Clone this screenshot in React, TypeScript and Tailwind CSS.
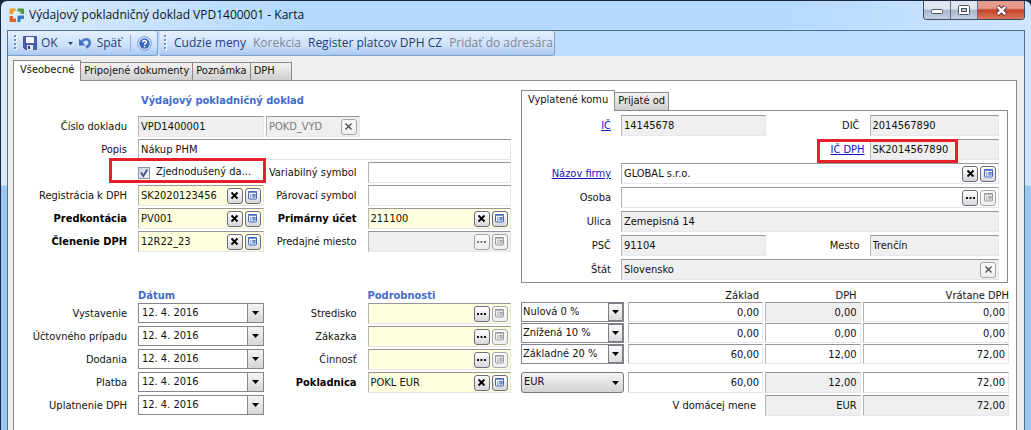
import type { ReactNode } from "react";

type Tone = "white" | "gray" | "yellow";
type Action = "clear" | "clearOff" | "more" | "moreOff" | "card" | "cardOff";

const tones: Record<Tone, string> = {
  white: "bg-white",
  gray: "bg-[#efefef]",
  yellow: "bg-[#ffffdf]",
};

const actionNames: Record<Action, string> = {
  clear: "Vymazať",
  clearOff: "Vymazať",
  more: "Vybrať",
  moreOff: "Vybrať",
  card: "Karta",
  cardOff: "Karta",
};

function ActionIcon({ kind }: { kind: Action }) {
  const off = kind.endsWith("Off");
  if (kind.startsWith("clear")) {
    return (
      <svg width="9" height="9" viewBox="0 0 9 9" aria-hidden="true">
        <path d="M1.5 1.5 7.5 7.5M7.5 1.5 1.5 7.5" stroke={off ? "#4a4a4a" : "#000"} strokeWidth={off ? 1.3 : 1.8} />
      </svg>
    );
  }
  if (kind.startsWith("more")) {
    return (
      <svg width="9" height="9" viewBox="0 0 9 9" aria-hidden="true">
        <path d="M0 4h2v2H0zM3.5 4h2v2h-2zM7 4h2v2H7z" fill={off ? "#777" : "#111"} />
      </svg>
    );
  }
  const c = off ? "#9a9a9a" : "#3f68b4";
  return (
    <svg width="9" height="9" viewBox="0 0 9 9" aria-hidden="true">
      <rect x="0.5" y="0.5" width="8" height="7.5" rx="1" fill={off ? "#eee" : "#f4f8ff"} stroke={c} />
      <path d="M0 1h9" stroke={c} strokeWidth="1.4" />
      <path d="M2 3.500h1.500v1H2zM2 5.500h1.500v1H2zM4.500 3h3v3.500h-3z" fill={c} />
      <path d="M5.500 4.200h1v1.200h-1z" fill="#fff" />
    </svg>
  );
}

function ActionButton({ kind }: { kind: Action }) {
  const off = kind.endsWith("Off");
  return (
    <button
      type="button"
      disabled={off}
      aria-label={actionNames[kind]}
      className={`flex h-4 w-4 shrink-0 items-center justify-center rounded-[3px] border bg-linear-to-b ${
        off ? "border-[#a5a5a5] from-[#fafafa] to-[#efefef]" : "border-[#6a6e7c] from-white to-[#d8d8dc]"
      }`}
    >
      <ActionIcon kind={kind} />
    </button>
  );
}

function Field({
  id,
  value = "",
  label,
  tone = "white",
  actions = [],
  right = false,
  muted = false,
  small = false,
}: {
  id: string;
  value?: string;
  label?: string;
  tone?: Tone;
  actions?: Action[];
  right?: boolean;
  muted?: boolean;
  small?: boolean;
}) {
  return (
    <div
      className={`flex min-w-0 items-center gap-0.5 border border-t-[#979797] border-r-[#e6e6ee] border-b-[#e6e6ee] border-l-[#b4b4b8] pr-0.5 ${
        small ? "h-5" : "h-[21px]"
      } ${tones[tone]}`}
    >
      <input
        id={id}
        aria-label={label}
        defaultValue={value}
        readOnly={tone === "gray"}
        className={`h-full w-full min-w-0 flex-1 bg-transparent outline-none ${right ? "px-px text-right" : "px-0.5"} ${
          muted ? "text-[#7b7b7b]" : "text-[#111]"
        }`}
      />
      {actions.map((a) => (
        <ActionButton key={a} kind={a} />
      ))}
    </div>
  );
}

function Label({ to, bold = false, children }: { to: string; bold?: boolean; children: ReactNode }) {
  return (
    <label
      htmlFor={to}
      className={`flex justify-end leading-[21px] whitespace-nowrap ${bold ? "font-bold text-black" : ""}`}
    >
      {children}
    </label>
  );
}

function Arrow() {
  return (
    <svg width="7" height="4" viewBox="0 0 7 4" aria-hidden="true">
      <path d="M0 0h7L3.5 4z" fill="#000" />
    </svg>
  );
}

function DateField({ id }: { id: string }) {
  return (
    <div className="flex h-5 min-w-0 border border-[#85858d] bg-white">
      <input id={id} defaultValue="12. 4. 2016" className="w-full min-w-0 flex-1 px-[3px] outline-none" />
      <button
        type="button"
        aria-label="Kalendár"
        className="flex w-4 items-center justify-center border-l border-[#85858d] bg-linear-to-b from-[#f4f4f4] to-[#d6d6d6]"
      >
        <Arrow />
      </button>
    </div>
  );
}

function RateSelect({ value, label }: { value: string; label: string }) {
  return (
    <div className="relative mr-1 h-5 border border-[#85858d] bg-white">
      <select aria-label={label} defaultValue={value} className="h-full w-full appearance-none px-px outline-none">
        <option>{value}</option>
      </select>
      <span className="pointer-events-none absolute inset-y-0 right-0 flex w-[15px] items-center justify-center border border-[#7b7b84] bg-linear-to-b from-[#fafafa] to-[#dcdcdc]">
        <Arrow />
      </span>
    </div>
  );
}

function Heading({ children }: { children: ReactNode }) {
  return <h2 className="leading-4 font-bold whitespace-nowrap text-[#436bcb]">{children}</h2>;
}

function Grip() {
  return (
    <svg width="3" height="16" viewBox="0 0 3 16" aria-hidden="true" className="shrink-0">
      <path d="M1 1h2v2H1zM1 5h2v2H1zM1 9h2v2H1zM1 13h2v2H1z" fill="#fff" />
      <path d="M0 0h2v2H0zM0 4h2v2H0zM0 8h2v2H0zM0 12h2v2H0z" fill="#6f95cf" />
    </svg>
  );
}

function TitleBar() {
  return (
    <header className="flex h-[29px] items-start pr-1.5 pl-2">
      <svg width="16" height="16" viewBox="0 0 16 16" className="mt-1.5 shrink-0" aria-hidden="true">
        <path d="M0.500 1.500h6v3H4.500V7H0.500z" fill="#f39a1c" />
        <path d="M8.500 1.500h6.500v5.500h-3.500V4.500h-3z" fill="#4d9a3a" />
        <path d="M0.500 9h3.500v2.500h3v3.500H0.500z" fill="#e2622a" />
        <path d="M8.500 8.500H15V12h-3.500v3H8.500z" fill="#3779be" />
        <path d="M4.500 4.500h4v1.500H6v2.500H4.500zM10 7v1.500h-2v3H7V10" fill="#fff" opacity=".7" />
      </svg>
      <h1 className="ml-1 flex-1 truncate font-['Open_Sans','Noto_Sans',sans-serif] text-xs leading-7 text-[#0b1420]">
        Výdajový pokladničný doklad VPD1400001 - Karta
      </h1>
      <div className="flex h-[19px] overflow-hidden rounded-b-[4px] border border-t-0 border-[#3d4d66]">
        <button
          type="button"
          aria-label="Minimalizovať"
          className="flex w-[27px] items-center justify-center border-r border-[#5b6d88] bg-linear-to-b from-[#dfe6f0] from-45% via-[#a9b6cb] via-50% to-[#c3cfe0]"
        >
          <svg width="12" height="6" viewBox="0 0 12 6" aria-hidden="true" className="mt-1">
            <rect x="0.500" y="0.500" width="11" height="4" rx="1" fill="#fff" stroke="#4a5468" />
          </svg>
        </button>
        <button
          type="button"
          aria-label="Maximalizovať"
          className="flex w-[27px] items-center justify-center border-r border-[#5b6d88] bg-linear-to-b from-[#dfe6f0] from-45% via-[#a9b6cb] via-50% to-[#c3cfe0]"
        >
          <svg width="12" height="10" viewBox="0 0 12 10" aria-hidden="true">
            <rect x="0.500" y="0.500" width="11" height="9" rx="1" fill="#fff" stroke="#4a5468" />
            <rect x="3.500" y="3.500" width="5" height="3" fill="#b8c4d6" stroke="#4a5468" />
          </svg>
        </button>
        <button
          type="button"
          aria-label="Zavrieť"
          className="flex w-[46px] items-center justify-center bg-linear-to-b from-[#e59a8a] from-40% via-[#c5402a] via-50% to-[#d9765a]"
        >
          <svg width="13" height="11" viewBox="0 0 13 11" aria-hidden="true">
            <path d="M2.500 1.500 10.500 9.500M10.500 1.500 2.500 9.500" stroke="#54303a" strokeWidth="4.400" />
            <path d="M2.800 1.800 10.200 9.200M10.200 1.800 2.800 9.200" stroke="#fff" strokeWidth="2.600" />
          </svg>
        </button>
      </div>
    </header>
  );
}

function ToolButton({ off = false, children }: { off?: boolean; children: ReactNode }) {
  return (
    <button type="button" disabled={off} className={`whitespace-nowrap ${off ? "text-[#7d8796]" : "text-[#1c3f7c]"}`}>
      {children}
    </button>
  );
}

function Toolbar() {
  const strip =
    "flex items-center rounded-r-[3px] border-r border-b border-[#7f9fce] bg-linear-to-b from-[#e6f0fd] via-[#cde0f9] via-60% to-[#a9c8f2]";
  return (
    <nav className="flex h-[25px] gap-0.5 bg-[#bfdbff] font-['Open_Sans','Noto_Sans',sans-serif] text-xs">
      <div className={`${strip} w-[150px] pl-1.5`}>
        <Grip />
        <button type="button" className="ml-1.5 flex items-center gap-1 text-[#1c3f7c]">
          <svg width="14" height="14" viewBox="0 0 14 14" aria-hidden="true">
            <path d="M0.500 0.500h13v13h-11l-2-2z" fill="#4a5fb0" stroke="#4453a0" />
            <path d="M3 1h8v6H3z" fill="#f3f6ff" />
            <path d="M4 9h6v5H4z" fill="#dfe5f5" />
            <path d="M5 10h2v3H5z" fill="#2c3570" />
          </svg>
          OK
        </button>
        <button type="button" aria-label="Ďalšie možnosti" className="ml-2.5">
          <svg width="5" height="3" viewBox="0 0 5 3" aria-hidden="true">
            <path d="M0 0h5L2.500 3z" fill="#1c3f7c" />
          </svg>
        </button>
        <button type="button" className="ml-1.5 flex items-center gap-1.5 text-[#1c3f7c]">
          <svg width="12" height="12" viewBox="0 0 12 12" aria-hidden="true">
            <path
              d="M3 4.500C5 1.500 9.500 1.500 10.500 4.500c.8 2.500-.8 4.800-3.500 6"
              fill="none"
              stroke="#4a78c8"
              strokeWidth="2.600"
            />
            <path d="M0 1.500v7h6.500z" fill="#3d6cc0" />
          </svg>
          Späť
        </button>
        <span className="ml-2 h-4 w-px bg-[#8fb0df]" />
        <button type="button" aria-label="Pomocník" className="ml-1.5">
          <svg width="15" height="15" viewBox="0 0 15 15" aria-hidden="true">
            <circle cx="7.500" cy="7.500" r="6.800" fill="#eef4ff" stroke="#6f95d6" />
            <circle cx="7.500" cy="7.500" r="5.200" fill="#3568c2" />
            <path
              d="M5.600 6.200c0-2.400 3.800-2.400 3.800-.1 0 1.300-1.800 1.400-1.800 2.700"
              fill="none"
              stroke="#fff"
              strokeWidth="1.500"
            />
            <path d="M6.800 9.800h1.600v1.500H6.800z" fill="#fff" />
          </svg>
        </button>
      </div>
      <div className={`${strip} gap-[7px] pr-px pl-1`}>
        <Grip />
        <ToolButton>Cudzie meny</ToolButton>
        <ToolButton off>Korekcia</ToolButton>
        <ToolButton>Register platcov DPH CZ</ToolButton>
        <ToolButton off>Pridať do adresára</ToolButton>
      </div>
    </nav>
  );
}

function Tab({ active = false, wide = false, children }: { active?: boolean; wide?: boolean; children: ReactNode }) {
  return (
    <button
      type="button"
      role="tab"
      aria-selected={active}
      className={`border border-[#8a8a8a] whitespace-nowrap ${
        active
          ? "z-10 -mb-px h-[21px] border-b-0 bg-white px-1.5 pb-0.5"
          : `h-[18px] border-b-0 border-l-0 bg-linear-to-b from-[#f3f3f3] to-[#cfcfcf] pl-[3px] ${wide ? "pr-4" : "pr-[3px]"}`
      }`}
    >
      {children}
    </button>
  );
}

const leftGrid = "grid grid-cols-[113px_minmax(0,7fr)_82px_minmax(0,8fr)] gap-x-[11px] gap-y-0.5";

function DocumentSection() {
  return (
    <section>
      <div className={leftGrid}>
        <div className="col-span-3 col-start-2 h-[33px] pt-3 pl-[3px]">
          <Heading>Výdajový pokladničný doklad</Heading>
        </div>

        <Label to="cislo">Číslo dokladu</Label>
        <div className="col-span-3 grid grid-cols-[126fr_94fr_149fr] gap-x-0.5">
          <Field id="cislo" value="VPD1400001" tone="gray" />
          <Field id="typ" label="Typ dokladu" value="POKD_VYD" tone="gray" muted actions={["clearOff"]} />
        </div>

        <Label to="popis">Popis</Label>
        <div className="col-span-3">
          <Field id="popis" value="Nákup PHM" />
        </div>

        <div className="relative col-start-2 flex items-center">
          <label className="flex items-center gap-1.5 whitespace-nowrap">
            <span className="relative flex h-3 w-3">
              <input
                type="checkbox"
                defaultChecked
                className="peer h-3 w-3 appearance-none border border-[#8796ab] bg-linear-to-br from-[#c9d3e2] to-[#f2f5fa]"
              />
              <svg
                viewBox="0 0 12 12"
                className="pointer-events-none absolute inset-0 hidden peer-checked:block"
                aria-hidden="true"
              >
                <path d="M3 5.500 5.300 9 9.300 2.500" fill="none" stroke="#3d5482" strokeWidth="1.800" />
              </svg>
            </span>
            Zjednodušený da...
          </label>
          <span className="pointer-events-none absolute -top-1 -right-0.5 -left-[29px] h-[25px] border-3 border-[#e5202b]" />
        </div>
        <Label to="variabilny">Variabilný symbol</Label>
        <Field id="variabilny" />

        <Label to="registracia">Registrácia k DPH</Label>
        <Field id="registracia" value="SK2020123456" tone="yellow" actions={["clear", "card"]} />
        <Label to="parovaci">Párovací symbol</Label>
        <Field id="parovaci" />

        <Label to="predkontacia" bold>
          Predkontácia
        </Label>
        <Field id="predkontacia" value="PV001" tone="yellow" actions={["clear", "card"]} />
        <Label to="ucet" bold>
          Primárny účet
        </Label>
        <Field id="ucet" value="211100" tone="yellow" actions={["clear", "card"]} />

        <Label to="clenenie" bold>
          Členenie DPH
        </Label>
        <Field id="clenenie" value="12R22_23" tone="yellow" actions={["clear", "card"]} />
        <Label to="miesto">Predajné miesto</Label>
        <Field id="miesto" tone="gray" actions={["moreOff", "cardOff"]} />
      </div>
    </section>
  );
}

function LinkLabel({ children }: { children: ReactNode }) {
  return (
    <a href="#firma" className="text-[#1414c8] underline">
      {children}
    </a>
  );
}

function PartnerSection() {
  const cell = "pr-[5px] text-right leading-[21px] whitespace-nowrap";
  return (
    <section className="pt-[9px]">
      <div role="tablist" className="flex items-end">
        <Tab active>Vyplatené komu</Tab>
        <Tab>Prijaté od</Tab>
      </div>
      <div className="mr-px grid grid-cols-[94px_minmax(0,144fr)_94px_minmax(0,129fr)] gap-x-[5px] gap-y-[3px] border border-[#8a8a8a] pt-1 pr-2 pb-0.5">
        <div className={cell}>
          <LinkLabel>IČ</LinkLabel>
        </div>
        <Field id="ic" label="IČ" value="14145678" tone="gray" />
        <label htmlFor="dic" className={cell}>
          DIČ
        </label>
        <Field id="dic" value="2014567890" tone="gray" />

        <div className="relative col-start-3 text-right leading-[21px] whitespace-nowrap">
          <LinkLabel>IČ DPH</LinkLabel>
          <span className="pointer-events-none absolute top-0 left-[46px] z-10 h-6 w-[141px] border-3 border-[#e5202b]" />
        </div>
        <Field id="icdph" label="IČ DPH" value="SK2014567890" tone="gray" />

        <div className={cell}>
          <LinkLabel>Názov firmy</LinkLabel>
        </div>
        <div className="col-span-3">
          <Field id="nazov" label="Názov firmy" value="GLOBAL s.r.o." actions={["clear", "card"]} />
        </div>

        <label htmlFor="osoba" className={cell}>
          Osoba
        </label>
        <div className="col-span-3">
          <Field id="osoba" actions={["more", "cardOff"]} />
        </div>

        <label htmlFor="ulica" className={cell}>
          Ulica
        </label>
        <div className="col-span-3">
          <Field id="ulica" value="Zemepisná 14" tone="gray" />
        </div>

        <label htmlFor="psc" className={cell}>
          PSČ
        </label>
        <Field id="psc" value="91104" tone="gray" />
        <label htmlFor="mesto" className={cell}>
          Mesto
        </label>
        <Field id="mesto" value="Trenčín" tone="gray" />

        <label htmlFor="stat" className={cell}>
          Štát
        </label>
        <div className="col-span-3">
          <Field id="stat" value="Slovensko" tone="gray" actions={["clearOff"]} />
        </div>
      </div>
    </section>
  );
}

function DetailsSection() {
  return (
    <section className={leftGrid}>
      <div className="col-start-2 h-[18px] pt-[5px]">
        <Heading>Dátum</Heading>
      </div>
      <div className="col-start-4 h-[18px] pt-[5px]">
        <Heading>Podrobnosti</Heading>
      </div>

      <Label to="vystavenie">Vystavenie</Label>
      <DateField id="vystavenie" />
      <Label to="stredisko">Stredisko</Label>
      <Field id="stredisko" tone="yellow" actions={["more", "cardOff"]} />

      <Label to="pripad">Účtovného prípadu</Label>
      <DateField id="pripad" />
      <Label to="zakazka">Zákazka</Label>
      <Field id="zakazka" tone="yellow" actions={["more", "cardOff"]} />

      <Label to="dodania">Dodania</Label>
      <DateField id="dodania" />
      <Label to="cinnost">Činnosť</Label>
      <Field id="cinnost" tone="yellow" actions={["more", "cardOff"]} />

      <Label to="platba">Platba</Label>
      <DateField id="platba" />
      <Label to="pokladnica" bold>
        Pokladnica
      </Label>
      <Field id="pokladnica" value="POKL EUR" tone="yellow" actions={["clear", "card"]} />

      <Label to="uplatnenie">Uplatnenie DPH</Label>
      <DateField id="uplatnenie" />
    </section>
  );
}

const rates = [
  { name: "Nulová 0 %", base: "0,00", vat: "0,00", total: "0,00", tone: "gray" as Tone },
  { name: "Znížená 10 %", base: "0,00", vat: "0,00", total: "0,00", tone: "white" as Tone },
  { name: "Základné 20 %", base: "60,00", vat: "12,00", total: "72,00", tone: "white" as Tone },
];

function VatTable() {
  return (
    <table className="w-full table-fixed border-collapse">
      <thead>
        <tr className="h-[19px] align-bottom">
          <th className="w-[22%]" aria-label="Sadzba" />
          <th className="w-[28%] pr-1.5 text-right leading-3 font-normal">Základ</th>
          <th className="w-[20%] pr-1.5 text-right leading-3 font-normal">DPH</th>
          <th className="w-[30%] text-right leading-3 font-normal">Vrátane DPH</th>
        </tr>
      </thead>
      <tbody>
        {rates.map((r, i) => (
          <tr key={r.name} className="h-[21px] align-top">
            <td>
              <RateSelect value={r.name} label="Sadzba DPH" />
            </td>
            <td className="pr-0.5">
              <Field id={`zaklad${i}`} label="Základ" value={r.base} right small />
            </td>
            <td className="pr-0.5">
              <Field id={`dph${i}`} label="DPH" value={r.vat} tone={r.tone} right small />
            </td>
            <td>
              <Field id={`spolu${i}`} label="Vrátane DPH" value={r.total} right small />
            </td>
          </tr>
        ))}
        <tr className="align-top">
          <td className="pt-[7px]">
            <div className="relative mr-1 h-[21px]">
              <select
                aria-label="Mena"
                defaultValue="EUR"
                className="h-full w-full appearance-none rounded-[3px] border border-[#77777f] bg-linear-to-b from-[#f4f4f4] to-[#d2d2d2] px-0.5 outline-none"
              >
                <option>EUR</option>
              </select>
              <span className="pointer-events-none absolute inset-y-0 right-[5px] flex items-center">
                <Arrow />
              </span>
            </div>
          </td>
          <td className="pt-[7px] pr-0.5">
            <Field id="zakladSpolu" label="Základ" value="60,00" right />
          </td>
          <td className="pt-[7px] pr-0.5">
            <Field id="dphSpolu" label="DPH" value="12,00" tone="gray" right />
          </td>
          <td className="pt-[7px]">
            <Field id="vrataneSpolu" label="Vrátane DPH" value="72,00" right />
          </td>
        </tr>
        <tr className="align-top">
          <td colSpan={2} className="pt-0.5 pr-[9px] text-right leading-[21px]">
            <label htmlFor="domaca">V domácej mene</label>
          </td>
          <td className="pt-0.5 pr-0.5">
            <Field id="domaca" value="EUR" tone="gray" right />
          </td>
          <td className="pt-0.5">
            <Field id="domacaSpolu" label="Spolu v domácej mene" value="72,00" tone="gray" right />
          </td>
        </tr>
      </tbody>
    </table>
  );
}

export default function App() {
  return (
    <div className="flex min-h-screen flex-col bg-[#17263f] pt-px pl-px font-['DejaVu_Sans_Condensed','DejaVu_Sans',sans-serif] text-[11px] text-[#111]">
      <div className="flex flex-1 flex-col rounded-t-[6px] bg-[linear-gradient(to_bottom,transparent_184px,#9cc7f5_185px),linear-gradient(to_right,#d8ebfd,#b5d9ff_30%,#b5d9ff_75%,#cfe6fd)]">
        <TitleBar />
        <div className="mr-1.5 ml-1.5 flex flex-1 flex-col border-x border-t border-[#4f7384] bg-[#efefef]">
          <Toolbar />
          <main className="flex flex-1 flex-col pt-1 pr-[7px] pl-[5px]">
            <div role="tablist" className="flex items-end">
              <Tab active>Všeobecné</Tab>
              <Tab>Pripojené dokumenty</Tab>
              <Tab>Poznámka</Tab>
              <Tab wide>DPH</Tab>
            </div>
            <div className="flex-1 border-x border-t border-[#8a8a8a] bg-white">
              <div className="grid grid-cols-[minmax(0,497fr)_minmax(0,488fr)] gap-x-2.5 pr-[7px]">
                <DocumentSection />
                <PartnerSection />
                <DetailsSection />
                <VatTable />
              </div>
            </div>
          </main>
        </div>
      </div>
    </div>
  );
}
